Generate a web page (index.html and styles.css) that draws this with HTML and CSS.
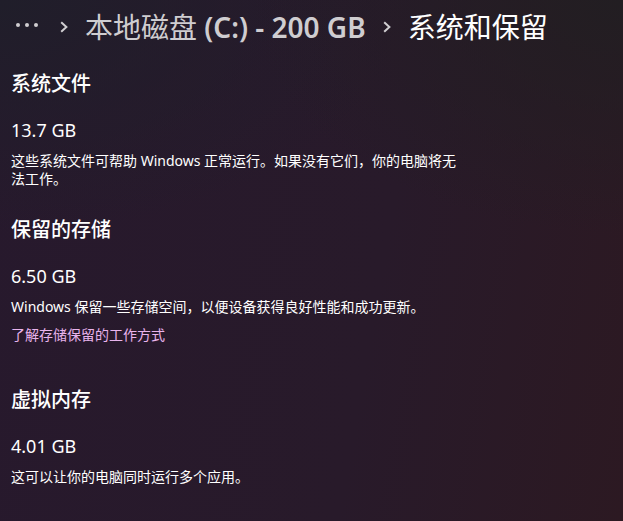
FILE: index.html
```html
<!DOCTYPE html>
<html lang="zh-CN">
<head>
<meta charset="utf-8">
<meta name="viewport" content="width=device-width, initial-scale=1">
<title>系统和保留</title>
<link rel="stylesheet" href="styles.css">
</head>
<body>
<header>
  <nav class="breadcrumb" aria-label="导航">
    <button class="more" type="button" aria-label="更多">
      <svg width="24" height="6" viewBox="0 0 24 6" fill="currentColor" aria-hidden="true"><circle cx="3" cy="3" r="2"/><circle cx="12" cy="3" r="2"/><circle cx="21" cy="3" r="2"/></svg>
    </button>
    <svg class="chevron" width="8" height="12" viewBox="0 0 8 12" aria-hidden="true"><path d="M1.2 1.2 6.4 6 1.2 10.8"/></svg>
    <a class="parent" href="#">本地磁盘 <span class="latin">(C:) - 200 GB</span></a>
    <svg class="chevron" width="8" height="12" viewBox="0 0 8 12" aria-hidden="true"><path d="M1.2 1.2 6.4 6 1.2 10.8"/></svg>
    <h1>系统和保留</h1>
  </nav>
</header>
<main>
  <section>
    <h2>系统文件</h2>
    <p class="size">13.7 GB</p>
    <p class="note">这些系统文件可帮助 Windows 正常运行。如果没有它们，你的电脑将无法工作。</p>
  </section>
  <section>
    <h2>保留的存储</h2>
    <p class="size">6.50 GB</p>
    <p class="note">Windows 保留一些存储空间，以便设备获得良好性能和成功更新。</p>
    <a class="learn" href="#">了解存储保留的工作方式</a>
  </section>
  <section>
    <h2>虚拟内存</h2>
    <p class="size">4.01 GB</p>
    <p class="note">这可以让你的电脑同时运行多个应用。</p>
  </section>
</main>
</body>
</html>
```
FILE: styles.css
```css
* {
  box-sizing: border-box;
}

body {
  margin: 0;
  min-height: 100vh;
  padding: 8px 11px;
  color: #fff;
  font: 14px/18px "Noto Sans", "Noto Sans CJK SC", sans-serif;
  background:
    radial-gradient(ellipse 60% 45% at 100% 0%, #221e22, transparent),
    radial-gradient(ellipse 65% 45% at 0% 0%, #201e2a, transparent),
    linear-gradient(100deg, #27192d 0%, #281a2a 60%, #2c1922 100%);
}

h1,
h2,
p {
  margin: 0;
  font-weight: 400;
}

.breadcrumb {
  display: flex;
  align-items: center;
  font-size: 28px;
  line-height: 38px;
}

.more {
  display: flex;
  width: 32px;
  height: 32px;
  padding: 0 4px 4px;
  align-items: center;
  border: 0;
  background: none;
  color: #d0ced1;
}

.chevron {
  margin: 0 17px;
  flex: none;
  fill: none;
  stroke: #d0ced1;
  stroke-width: 2;
}

.parent {
  color: #cfcdd0;
  text-decoration: none;
}

.latin {
  font-weight: 600;
}

h1 {
  font-size: 28px;
}

main {
  display: flex;
  flex-direction: column;
  gap: 28px;
  padding-top: 24px;
}

h2 {
  font-size: 20px;
  font-weight: 500;
  line-height: 28px;
}

.size {
  margin: 20px 0 10px;
  font-size: 18px;
  line-height: 24px;
}

.note {
  max-width: 450px;
}

.learn {
  display: block;
  width: fit-content;
  margin: 10px 0 14px;
  color: #e8b4ec;
  text-decoration: none;
}
```
